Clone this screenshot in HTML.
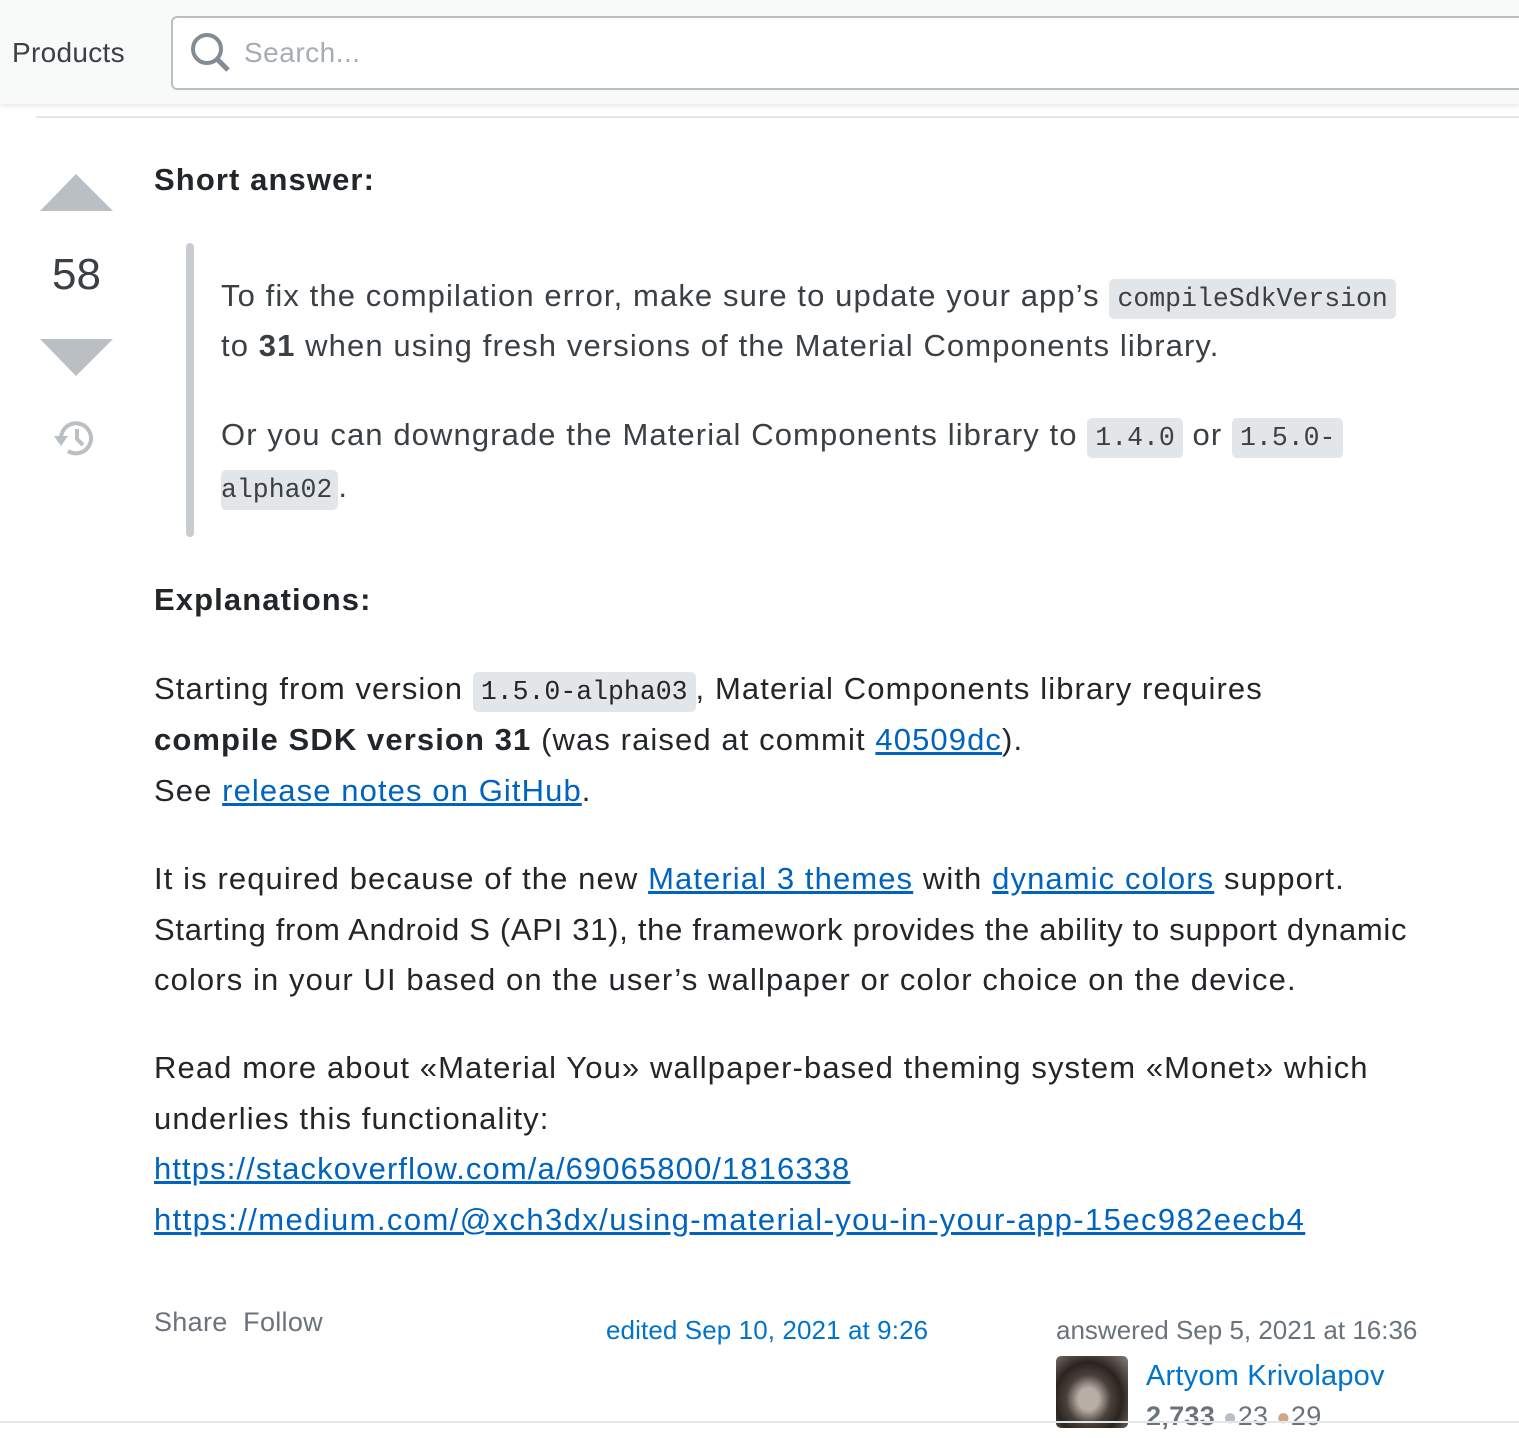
<!DOCTYPE html><html><head><meta charset="utf-8"><style>
body{margin:0;width:1519px;height:1423px;overflow:hidden;background:#fff;font-family:"Liberation Sans",sans-serif;position:relative}
.l{position:absolute;white-space:nowrap;font-size:31px;letter-spacing:1.1px;color:#232629;line-height:40px}
.g{color:#3b4045}
code{font-family:"Liberation Mono",monospace;font-size:26.5px;letter-spacing:0;background:#e3e6e8;padding:5px 8px;border-radius:5px}
a{color:#0063bf;text-decoration:underline}
b{font-weight:bold}
</style></head><body>
<div style="position:absolute;left:0;top:0;width:1519px;height:104px;background:#f8f9f9;box-shadow:0 2px 6px rgba(0,0,0,.1)"></div>
<div class="l" style="left:12px;top:33px;font-size:28px;letter-spacing:0.3px;color:#3b4045">Products</div>
<div style="position:absolute;left:171px;top:16px;width:1360px;height:70px;border:2px solid #babfc4;border-radius:6px;background:#fff"></div>
<svg style="position:absolute;left:188px;top:30px" width="46" height="44" viewBox="0 0 46 44"><circle cx="19" cy="19" r="14" fill="none" stroke="#838c95" stroke-width="4"/><line x1="29" y1="29" x2="40" y2="40" stroke="#838c95" stroke-width="5"/></svg>
<div class="l" style="left:244px;top:33px;font-size:28px;letter-spacing:0.5px;color:#a6acb2">Search...</div>
<div style="position:absolute;left:36px;top:116px;width:1483px;height:2px;background:#e3e6e8"></div>
<svg style="position:absolute;left:40px;top:174px" width="73" height="37"><polygon points="0,37 36,0 73,37" fill="#babfc4"/></svg>
<div class="l" style="left:52px;top:253px;font-size:44px;letter-spacing:0;color:#3b4045;line-height:44px">58</div>
<svg style="position:absolute;left:40px;top:339px" width="73" height="37"><polygon points="0,0 73,0 36,37" fill="#babfc4"/></svg>
<svg style="position:absolute;left:52px;top:418px" width="46" height="40" viewBox="0 0 46 40"><path d="M9 20 A15 15 0 1 1 16 33" fill="none" stroke="#babfc4" stroke-width="4"/><polygon points="2,18 16,18 9,28" fill="#babfc4"/><path d="M25 11 V21 L31 27" fill="none" stroke="#babfc4" stroke-width="4"/></svg>
<div class="l" style="left:154px;top:160px;font-weight:bold">Short answer:</div>
<div style="position:absolute;left:186px;top:243px;width:8px;height:294px;background:#c8ccd0;border-radius:4px"></div>
<div class="l g" style="left:221px;top:276px">To fix the compilation error, make sure to update your app’s <code>compileSdkVersion</code></div>
<div class="l g" style="left:221px;top:326px">to <b>31</b> when using fresh versions of the Material Components library.</div>
<div class="l g" style="left:221px;top:415px">Or you can downgrade the Material Components library to <code>1.4.0</code> or <code>1.5.0-</code></div>
<div class="l g" style="left:221px;top:467px"><code style="padding:5px 6px 5px 0;margin-left:0">alpha02</code>.</div>
<div class="l" style="left:154px;top:580px;font-weight:bold">Explanations:</div>
<div class="l" style="left:154px;top:669px">Starting from version <code>1.5.0-alpha03</code>, Material Components library requires</div>
<div class="l" style="left:154px;top:720px"><b>compile SDK version 31</b> (was raised at commit <a>40509dc</a>).</div>
<div class="l" style="left:154px;top:771px">See <a>release notes on GitHub</a>.</div>
<div class="l" style="left:154px;top:859px">It is required because of the new <a>Material 3 themes</a> with <a>dynamic colors</a> support.</div>
<div class="l" style="left:154px;top:910px;letter-spacing:0.7px">Starting from Android S (API 31), the framework provides the ability to support dynamic</div>
<div class="l" style="left:154px;top:960px">colors in your UI based on the user’s wallpaper or color choice on the device.</div>
<div class="l" style="left:154px;top:1048px">Read more about «Material You» wallpaper-based theming system «Monet» which</div>
<div class="l" style="left:154px;top:1099px">underlies this functionality:</div>
<div class="l" style="left:154px;top:1149px"><a>https://stackoverflow.com/a/69065800/1816338</a></div>
<div class="l" style="left:154px;top:1200px;letter-spacing:1.4px"><a>https://medium.com/@xch3dx/using-material-you-in-your-app-15ec982eecb4</a></div>
<div class="l" style="left:154px;top:1302px;font-size:27px;letter-spacing:0.3px;color:#6a737c">Share&nbsp;&nbsp;Follow</div>
<div class="l" style="left:606px;top:1310px;font-size:26px;letter-spacing:0.1px;color:#0074cc">edited Sep 10, 2021 at 9:26</div>
<div class="l" style="left:1056px;top:1310px;font-size:26px;letter-spacing:0;color:#6a737c">answered Sep 5, 2021 at 16:36</div>
<div style="position:absolute;left:1056px;top:1356px;width:72px;height:72px;border-radius:5px;background:radial-gradient(ellipse at 45% 60%,#b8aea6 0 18%,#4a403a 40%,#2a2420 60%,#8a8078)"></div>
<div class="l" style="left:1146px;top:1356px;font-size:29px;letter-spacing:0.2px;color:#0074cc">Artyom Krivolapov</div>
<div class="l" style="left:1146px;top:1396px;font-size:27px;letter-spacing:0.3px;color:#6a737c"><b style="color:#6a737c">2,733</b> <span style="color:#babfc4;font-size:24px">●</span>23 <span style="color:#d1a684;font-size:24px">●</span>29</div>
<div style="position:absolute;left:0;top:1421px;width:1519px;height:2px;background:#e3e6e8"></div>
</body></html>
